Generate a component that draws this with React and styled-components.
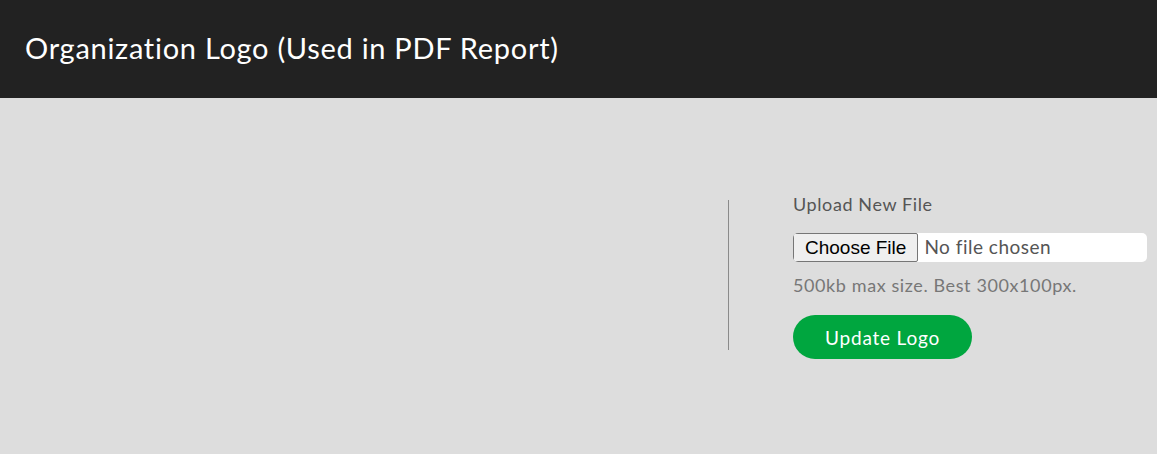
import React from 'react'
import styled, { createGlobalStyle } from 'styled-components'

const GlobalStyle = createGlobalStyle`
  html, body {
    margin: 0;
    padding: 0;
    height: 100%;
  }
  body {
    background: #dddddd;
    font-family: Lato, 'Open Sans', sans-serif;
  }
  #root {
    min-height: 100%;
    display: flex;
    flex-direction: column;
  }
`

const Page = styled.div`
  flex: 1;
  display: flex;
  flex-direction: column;
  min-height: 454px;
`

const Header = styled.header`
  height: 98px;
  background: #222222;
  display: flex;
  align-items: center;
  padding: 0 25px 4px;
  box-sizing: border-box;
`

const Title = styled.h1`
  margin: 0;
  color: #ffffff;
  font-weight: 400;
  font-size: 29px;
  letter-spacing: 0.72px;
`

const Body = styled.main`
  flex: 1;
  display: flex;
  align-items: center;
`

const Preview = styled.div`
  width: 729px;
  height: 150px;
  margin-bottom: 2px;
  border-right: 1px solid #8a8a8a;
  box-sizing: border-box;
`

const Form = styled.form`
  padding-left: 64px;
  display: flex;
  flex-direction: column;
  align-items: flex-start;
  letter-spacing: 0.6px;
`

const Label = styled.label`
  font-size: 18px;
  color: #555555;
  margin-bottom: 18px;
`

const FileInput = styled.input`
  width: 354px;
  height: 29px;
  box-sizing: border-box;
  background: #ffffff;
  border-radius: 5px;
  font-family: Lato, sans-serif;
  font-size: 19px;
  letter-spacing: 0.5px;
  color: #555555;

  &::file-selector-button {
    font-family: 'Liberation Sans', Arial, sans-serif;
    font-size: 19px;
    letter-spacing: 0;
    color: #000000;
    background: #efefef;
    border: 1px solid #767676;
    border-radius: 2px;
    height: 29px;
    padding: 0 11px;
    margin-right: 6px;
  }
`

const Hint = styled.p`
  margin: 12px 0 19px;
  font-size: 18px;
  color: #777777;
`

const Button = styled.button`
  height: 44px;
  padding: 0 32px;
  border: none;
  border-radius: 22px;
  background: #00a63f;
  color: #ffffff;
  font-family: Lato, sans-serif;
  font-size: 19px;
  letter-spacing: 0.8px;
  cursor: pointer;
`

export default function App() {
  return (
    <Page>
      <GlobalStyle />
      <Header>
        <Title>Organization Logo (Used in PDF Report)</Title>
      </Header>
      <Body>
        <Preview />
        <Form onSubmit={e => e.preventDefault()}>
          <Label htmlFor='logo'>Upload New File</Label>
          <FileInput id='logo' type='file' accept='image/*' />
          <Hint>500kb max size. Best 300x100px.</Hint>
          <Button type='submit'>Update Logo</Button>
        </Form>
      </Body>
    </Page>
  )
}
